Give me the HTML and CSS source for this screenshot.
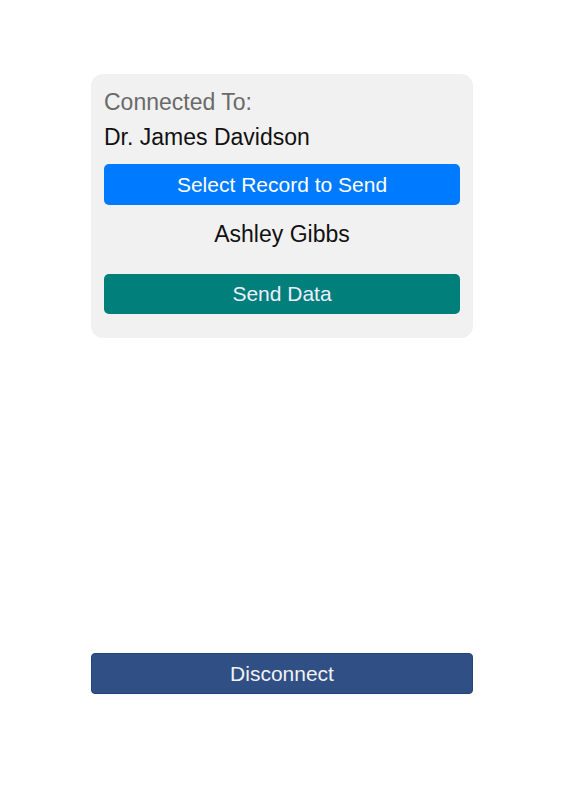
FILE: index.html
```html
<!DOCTYPE html>
<html lang="en">
<head>
  <meta charset="UTF-8">
  <meta name="viewport" content="width=device-width, initial-scale=1.0">
  <title>Send Record</title>
  <link rel="stylesheet" href="styles.css">
</head>
<body>
  <main class="screen">
    <section class="panel">
      <div class="label">Connected To:</div>
      <div class="peer">Dr. James Davidson</div>
      <button class="btn btn-select">Select Record to Send</button>
      <div class="record">Ashley Gibbs</div>
      <button class="btn btn-send">Send Data</button>
    </section>
    <button class="btn btn-disconnect">Disconnect</button>
  </main>
</body>
</html>
```

FILE: styles.css
```css
body {
  margin: 0;
  padding: 0;
  background-color: #fff;
  font-family: "Liberation Sans", Arial, sans-serif;
}
.screen {
  display: flex;
  flex-direction: column;
  padding: 74px 0 0 91px;
  width: 382px;
}
.panel {
  display: flex;
  flex-direction: column;
  background-color: #f1f1f1;
  border-radius: 12px;
  padding: 11px 13px 24px;
}
.label {
  font-size: 23px;
  line-height: 35px;
  color: #6a6a6a;
}
.peer {
  font-size: 23px;
  line-height: 35px;
  color: #111;
}
.record {
  font-size: 23px;
  line-height: 34px;
  color: #111;
  text-align: center;
  margin: 12px 0 23px;
}
.btn {
  display: block;
  width: 100%;
  border: none;
  border-radius: 5px;
  font-family: inherit;
  font-size: 21px;
  color: #fff;
  padding: 0;
}
.btn-select {
  height: 41px;
  margin-top: 9px;
  background-color: #007aff;
}
.btn-send {
  height: 40px;
  background-color: #007f7b;
  color: #eef;
}
.btn-disconnect {
  height: 41px;
  margin-top: 315px;
  background-color: #2f4f85;
  border: 1px solid #23437a;
  border-radius: 4px;
  color: #f2f2f2;
}
```
